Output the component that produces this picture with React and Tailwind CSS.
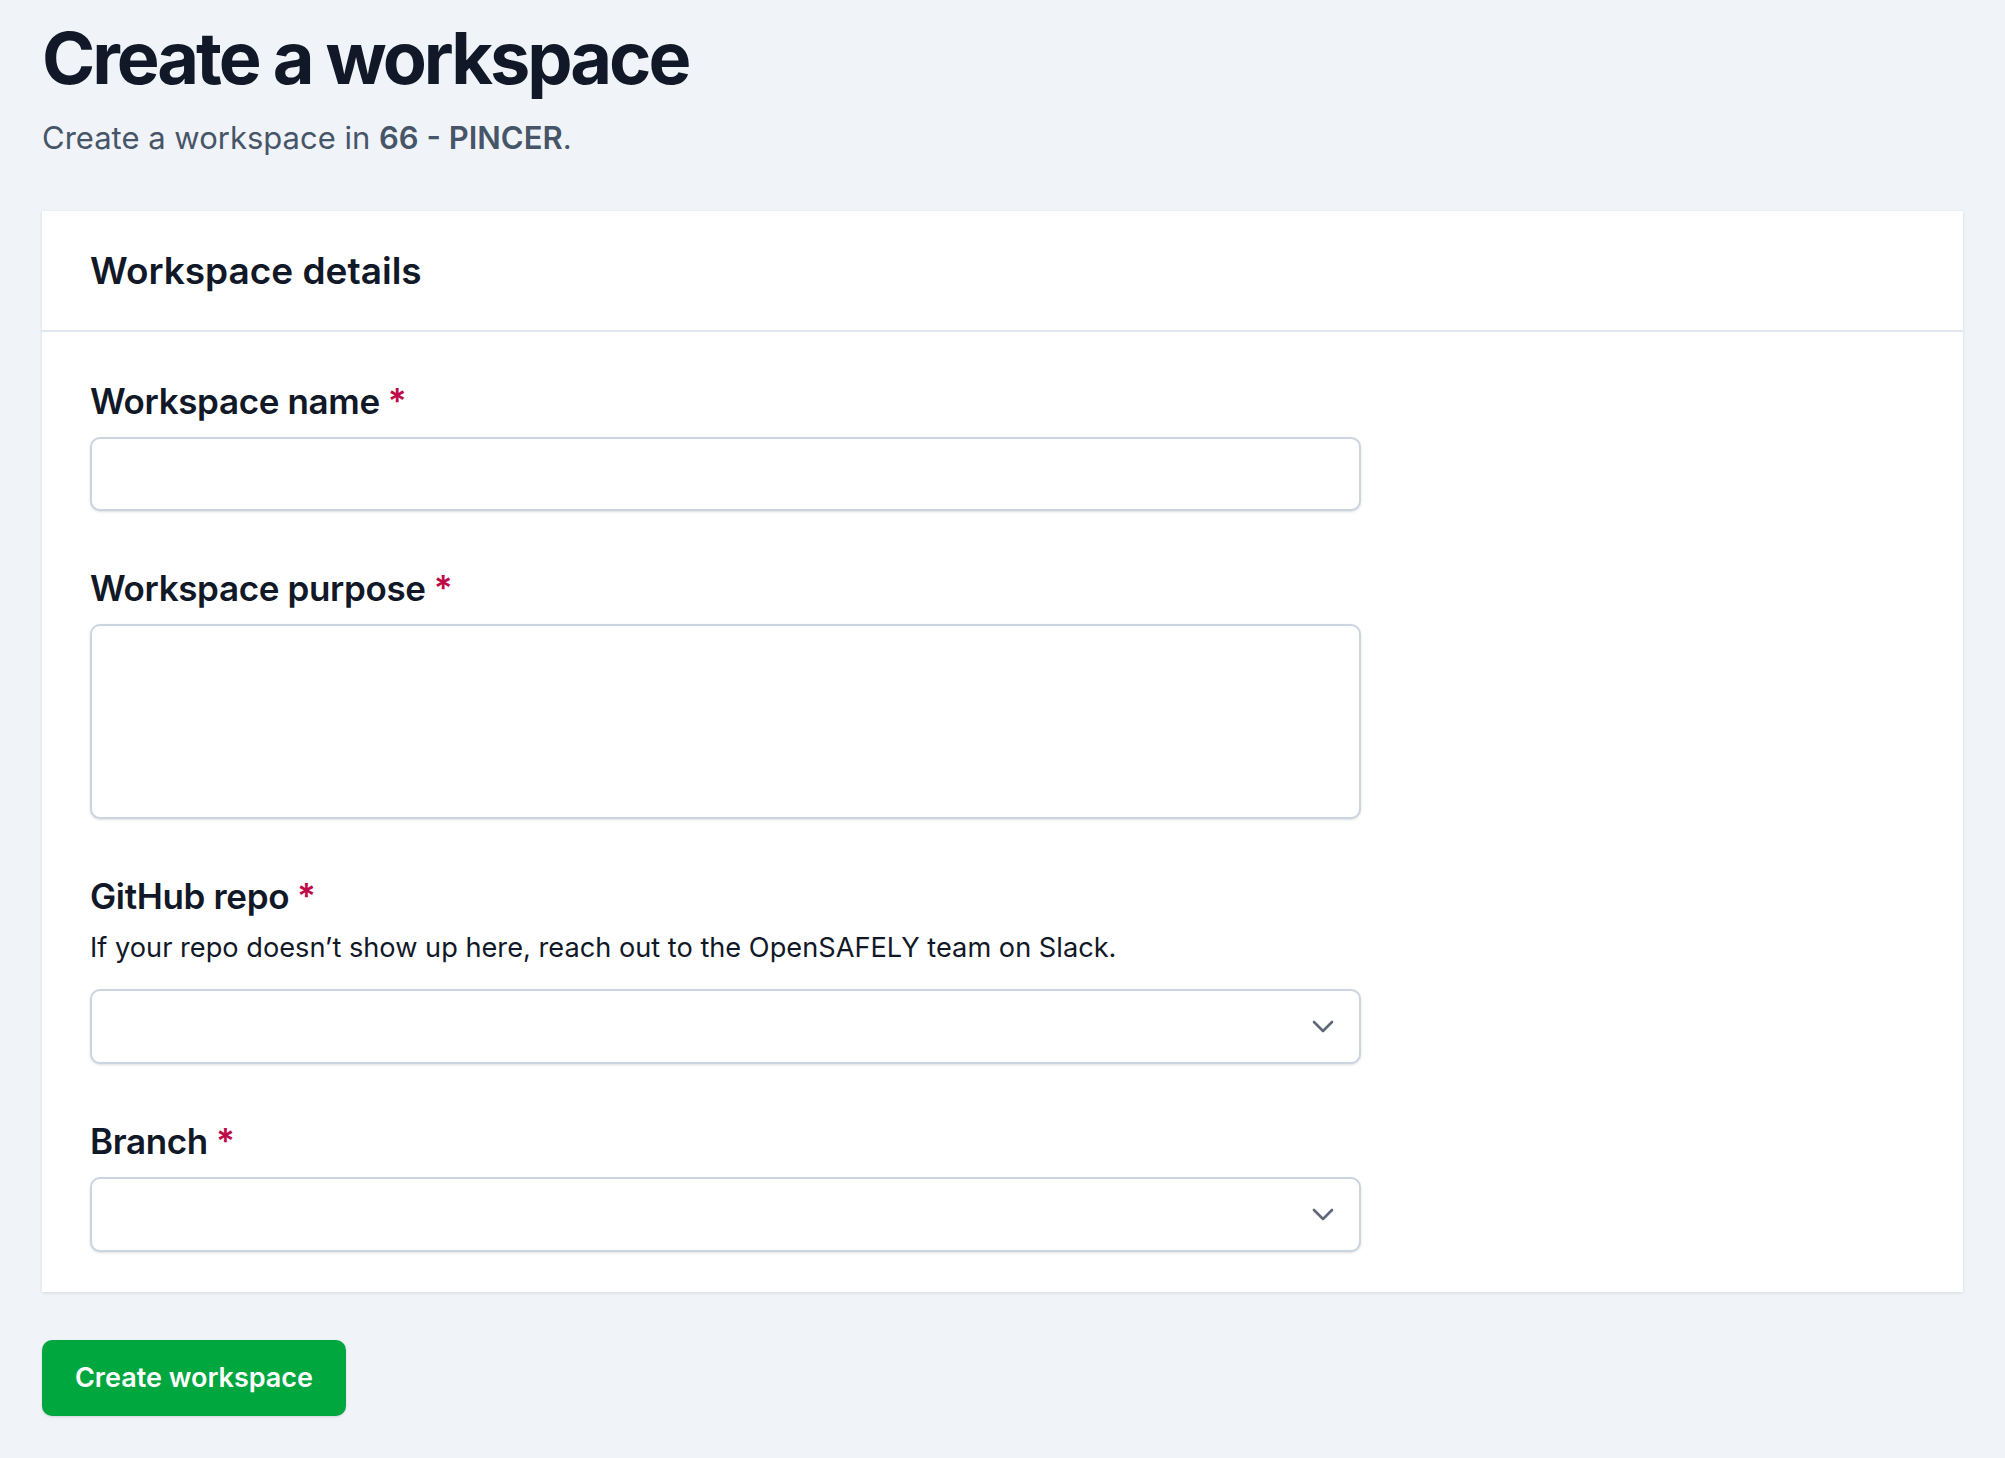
import React from "react";

const Required = () => <span className="ml-2 text-[#be0a48]">*</span>;

const Label = ({ children }) => (
  <label className="block text-[35px] leading-[42px] font-semibold tracking-[-0.01em] text-[#111827]">
    {children}
    <Required />
  </label>
);

const SelectBox = () => (
  <div className="mt-[15px] flex h-[75px] w-[1271px] items-center justify-end rounded-[10px] border-2 border-[#cbd5e1] bg-white pr-[25px] shadow-sm">
    <svg
      width="22"
      height="14"
      viewBox="0 0 22 14"
      fill="none"
      stroke="#5f6877"
      strokeWidth="2.6"
      strokeLinecap="round"
      strokeLinejoin="round"
    >
      <path d="M2 2l9 9 9-9" />
    </svg>
  </div>
);

export default function App() {
  return (
    <div
      className="min-h-[1458px] bg-[#f0f4f8] px-[42px] pt-[22px] pb-10"
      style={{ fontFamily: "Inter, 'Liberation Sans', sans-serif" }}
    >
      {/* Page heading */}
      <h1 className="text-[72px] leading-[72px] font-bold tracking-[-0.042em] text-[#111827]">
        Create a workspace
      </h1>
      <p className="mt-6 text-[31px] leading-[40px] text-[#475569]">
        Create a workspace in <span className="font-semibold">66 - PINCER</span>.
      </p>

      {/* Form card */}
      <div className="mt-[53px] bg-white shadow-[0_1px_3px_rgba(15,23,42,0.12)]">
        <div className="flex h-[121px] items-center border-b-2 border-[#e2e8f0] px-12">
          <h2 className="text-[37px] leading-[45px] font-semibold text-[#111827]">
            Workspace details
          </h2>
        </div>

        <div className="flex flex-col gap-14 px-12 pt-12 pb-10">
          <div>
            <Label>Workspace name</Label>
            <input
              type="text"
              className="mt-[15px] block h-[74px] w-[1271px] rounded-[10px] border-2 border-[#cbd5e1] bg-white shadow-sm"
            />
          </div>

          <div>
            <Label>Workspace purpose</Label>
            <textarea className="mt-[15px] block h-[195px] w-[1271px] resize-none rounded-[10px] border-2 border-[#cbd5e1] bg-white shadow-sm" />
          </div>

          <div>
            <Label>GitHub repo</Label>
            <p className="mt-[11px] text-[27.2px] leading-[40px] text-[#111827]">
              If your repo doesn’t show up here, reach out to the OpenSAFELY team on Slack.
            </p>
            <div className="mt-[21px]">
              <SelectBox />
            </div>
          </div>

          <div>
            <Label>Branch</Label>
            <SelectBox />
          </div>
        </div>
      </div>

      <button className="mt-12 flex h-[76px] w-[304px] items-center justify-center rounded-[10px] bg-[#00a63e] text-[27px] font-semibold text-white shadow-sm">
        Create workspace
      </button>
    </div>
  );
}
